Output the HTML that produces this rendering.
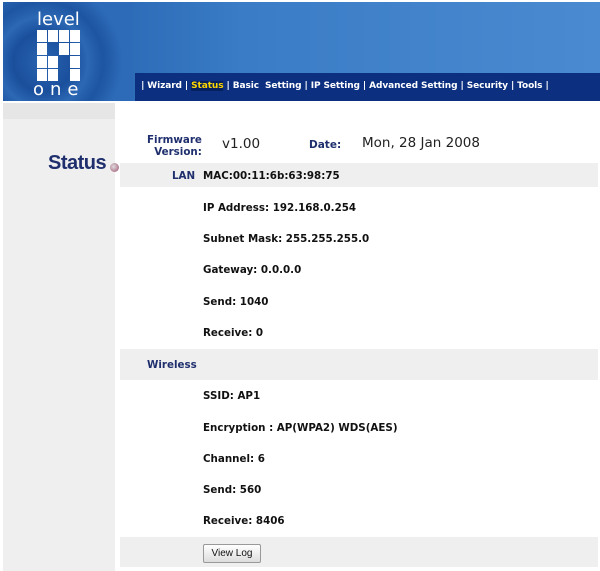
<!DOCTYPE html><html><head><style>
body{margin:0;width:600px;height:571px;background:#fff;position:relative;font-family:"DejaVu Sans",Verdana,sans-serif;overflow:hidden}
.a{position:absolute}
.hdr{left:3px;top:2px;width:597px;height:99px;background:linear-gradient(90deg,#1f5aa8 0%,#3a7cc6 40%,#4a8ad0 100%)}
.nav{left:135px;top:73px;width:465px;height:28px;background:#0d2f80;color:#fff;font-size:9px;font-weight:bold;line-height:26px;white-space:pre;letter-spacing:-0.1px}
.nav b{color:#ffd800;background:#06205e}
.left{left:3px;top:103px;width:112px;height:468px;background:#efefef}
.lb{left:3px;top:103px;width:112px;height:16px;background:#e6e6e6}
.band{left:120px;width:478px;background:#efefef}
.t{font-size:10.3px;font-weight:bold;color:#111;white-space:nowrap}
.bl{color:#1f2f6e}
.sq{position:absolute;width:10px;height:12px;background:#fff}
</style></head><body>
<div class="a hdr"></div>
<div class="a" style="left:3px;top:2px;width:130px;height:99px;background:radial-gradient(circle at 40px 60px,#2a64b0 0,#1a4f9c 30px,#2c68b4 45px,#1d55a2 60px,#2d6bb8 80px)"></div>
<div class="a" style="left:37px;top:9px;color:#fff;font-size:18px;letter-spacing:0px;font-family:'DejaVu Sans',sans-serif">level</div>
<div class="a" style="left:33px;top:79px;color:#fff;font-size:18px;letter-spacing:6px;font-family:'DejaVu Sans',sans-serif">one</div>
<div class="a" style="left:37px;top:30px;width:44px;height:52px">
<div class="sq" style="left:0;top:0"></div><div class="sq" style="left:11px;top:0"></div><div class="sq" style="left:22px;top:0"></div><div class="sq" style="left:33px;top:0"></div>
<div class="sq" style="left:0;top:13px"></div><div class="sq" style="left:22px;top:13px"></div><div class="sq" style="left:33px;top:13px"></div>
<div class="sq" style="left:0;top:26px"></div><div class="sq" style="left:11px;top:26px"></div><div class="sq" style="left:33px;top:26px"></div>
<div class="sq" style="left:0;top:39px"></div><div class="sq" style="left:11px;top:39px"></div><div class="sq" style="left:33px;top:39px"></div>
</div>
<div class="a nav">  | Wizard | <b>Status</b> | Basic  Setting | IP Setting | Advanced Setting | Security | Tools |</div>
<div class="a left"></div><div class="a lb"></div>
<div class="a bl" style="left:48px;top:152px;font-size:20px;font-weight:bold;font-family:'Liberation Sans',sans-serif;letter-spacing:-0.5px">Status</div>
<div class="a" style="left:110px;top:163px;width:9px;height:9px;border-radius:50%;background:radial-gradient(circle at 40% 40%,#ddd,#a05070);"></div>
<div class="a band" style="top:163px;height:24px"></div>
<div class="a band" style="top:349px;height:31px"></div>
<div class="a band" style="top:537px;height:30px"></div>
<div class="a t bl" style="left:147px;top:134px;text-align:center;line-height:12px">Firmware<br>&nbsp;&nbsp;Version:</div>
<div class="a" style="left:222px;top:136px;font-size:13.5px;color:#222">v1.00</div>
<div class="a t bl" style="left:309px;top:139px;font-size:10.5px">Date:</div>
<div class="a" style="left:362px;top:135px;font-size:13.5px;color:#222">Mon, 28 Jan 2008</div>
<div class="a t bl" style="left:172px;top:170px">LAN</div>
<div class="a t" style="left:203px;top:170px">MAC:00:11:6b:63:98:75</div>
<div class="a t" style="left:203px;top:202px">IP Address: 192.168.0.254</div>
<div class="a t" style="left:203px;top:233px">Subnet Mask: 255.255.255.0</div>
<div class="a t" style="left:203px;top:264px">Gateway: 0.0.0.0</div>
<div class="a t" style="left:203px;top:296px">Send: 1040</div>
<div class="a t" style="left:203px;top:327px">Receive: 0</div>
<div class="a t bl" style="left:147px;top:359px">Wireless</div>
<div class="a t" style="left:203px;top:390px">SSID: AP1</div>
<div class="a t" style="left:203px;top:422px">Encryption : AP(WPA2) WDS(AES)</div>
<div class="a t" style="left:203px;top:453px">Channel: 6</div>
<div class="a t" style="left:203px;top:484px">Send: 560</div>
<div class="a t" style="left:203px;top:515px">Receive: 8406</div>
<div class="a" style="left:203px;top:544px;width:56px;height:17px;border:1px solid #999;border-radius:2px;background:linear-gradient(#fff,#ddd);font-size:10px;font-family:'Liberation Sans',sans-serif;text-align:center;line-height:17px;color:#111">View Log</div>
</body></html>
